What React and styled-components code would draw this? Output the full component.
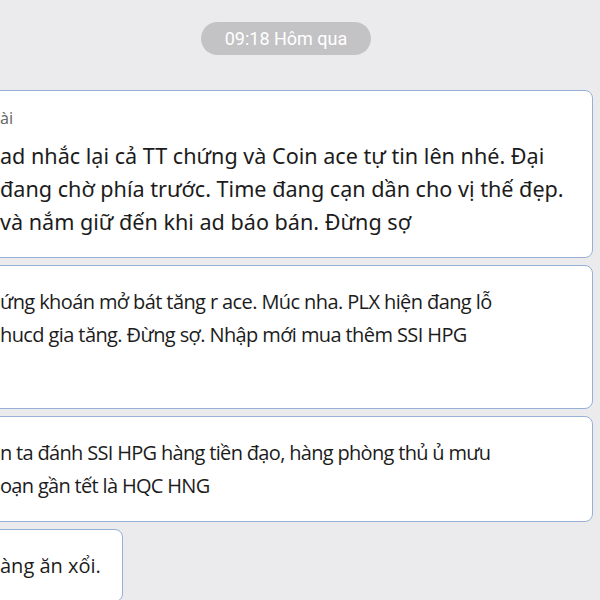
import React from "react";
import styled, { createGlobalStyle } from "styled-components";

const GlobalStyle = createGlobalStyle`
  html, body {
    margin: 0;
    padding: 0;
    background: #ebebed;
    overflow: hidden;
  }
`;

const Screen = styled.div`
  width: 600px;
  height: 600px;
  overflow: hidden;
  background: #ebebed;
  display: flex;
  flex-direction: column;
  align-items: center;
  padding-top: 22px;
  box-sizing: border-box;
`;

const TimePill = styled.div`
  height: 33px;
  padding: 0 24px;
  border-radius: 17px;
  background: #c3c3c5;
  color: #ffffff;
  font-family: Roboto, "Liberation Sans", sans-serif;
  font-size: 18px;
  line-height: 33px;
  margin-bottom: 35px;
  margin-right: 28px;
`;

const MessageList = styled.div`
  align-self: stretch;
  display: flex;
  flex-direction: column;
  align-items: flex-start;
  gap: 7px;
  margin-left: -15px;
`;

const Bubble = styled.div`
  box-sizing: border-box;
  width: ${(p) => p.$width}px;
  background: #ffffff;
  border: 1.5px solid #98b0d8;
  border-radius: 8px;
  padding: 19px 16px ${(p) => p.$padBottom || 19}px 14px;
  font-family: ${(p) => (p.$wide ? '"Noto Sans"' : '"Open Sans"')}, sans-serif;
  font-size: ${(p) => p.$size}px;
  letter-spacing: ${(p) => p.$tracking || 0}px;
  color: #1c1c1c;
`;

const Sender = styled.div`
  font-size: 16px;
  line-height: 16px;
  letter-spacing: 0;
  color: #6b6b6b;
  margin-bottom: 13px;
`;

const Line = styled.div`
  line-height: 33px;
  white-space: nowrap;
  min-height: 33px;
`;

const messages = [
  {
    width: 608,
    wide: true,
    size: 21.6,
    sender: "ài",
    lines: [
      "ad nhắc lại cả TT chứng và Coin ace tự tin lên nhé. Đại",
      "đang chờ phía trước. Time đang cạn dần cho vị thế đẹp.",
      "và nắm giữ đến khi ad báo bán. Đừng sợ",
    ],
  },
  {
    width: 608,
    size: 20,
    tracking: -0.6,
    padBottom: 24,
    lines: [
      "ứng khoán mở bát tăng r ace. Múc nha. PLX hiện đang lỗ",
      "hucd gia tăng. Đừng sợ. Nhập mới mua thêm SSI HPG",
      "",
    ],
  },
  {
    width: 608,
    size: 20,
    tracking: -0.68,
    lines: [
      "n ta đánh SSI HPG hàng tiền đạo, hàng phòng thủ ủ mưu",
      "oạn gần tết là HQC HNG",
    ],
  },
  {
    width: 138,
    size: 20,
    lines: ["àng ăn xổi."],
  },
];

export default function App() {
  return (
    <>
      <GlobalStyle />
      <Screen>
        <TimePill>09:18 Hôm qua</TimePill>
        <MessageList>
          {messages.map((m, i) => (
            <Bubble
              key={i}
              $width={m.width}
              $wide={m.wide}
              $size={m.size}
              $tracking={m.tracking}
              $padBottom={m.padBottom}
            >
              {m.sender && <Sender>{m.sender}</Sender>}
              {m.lines.map((l, j) => (
                <Line key={j}>{l}</Line>
              ))}
            </Bubble>
          ))}
        </MessageList>
      </Screen>
    </>
  );
}
